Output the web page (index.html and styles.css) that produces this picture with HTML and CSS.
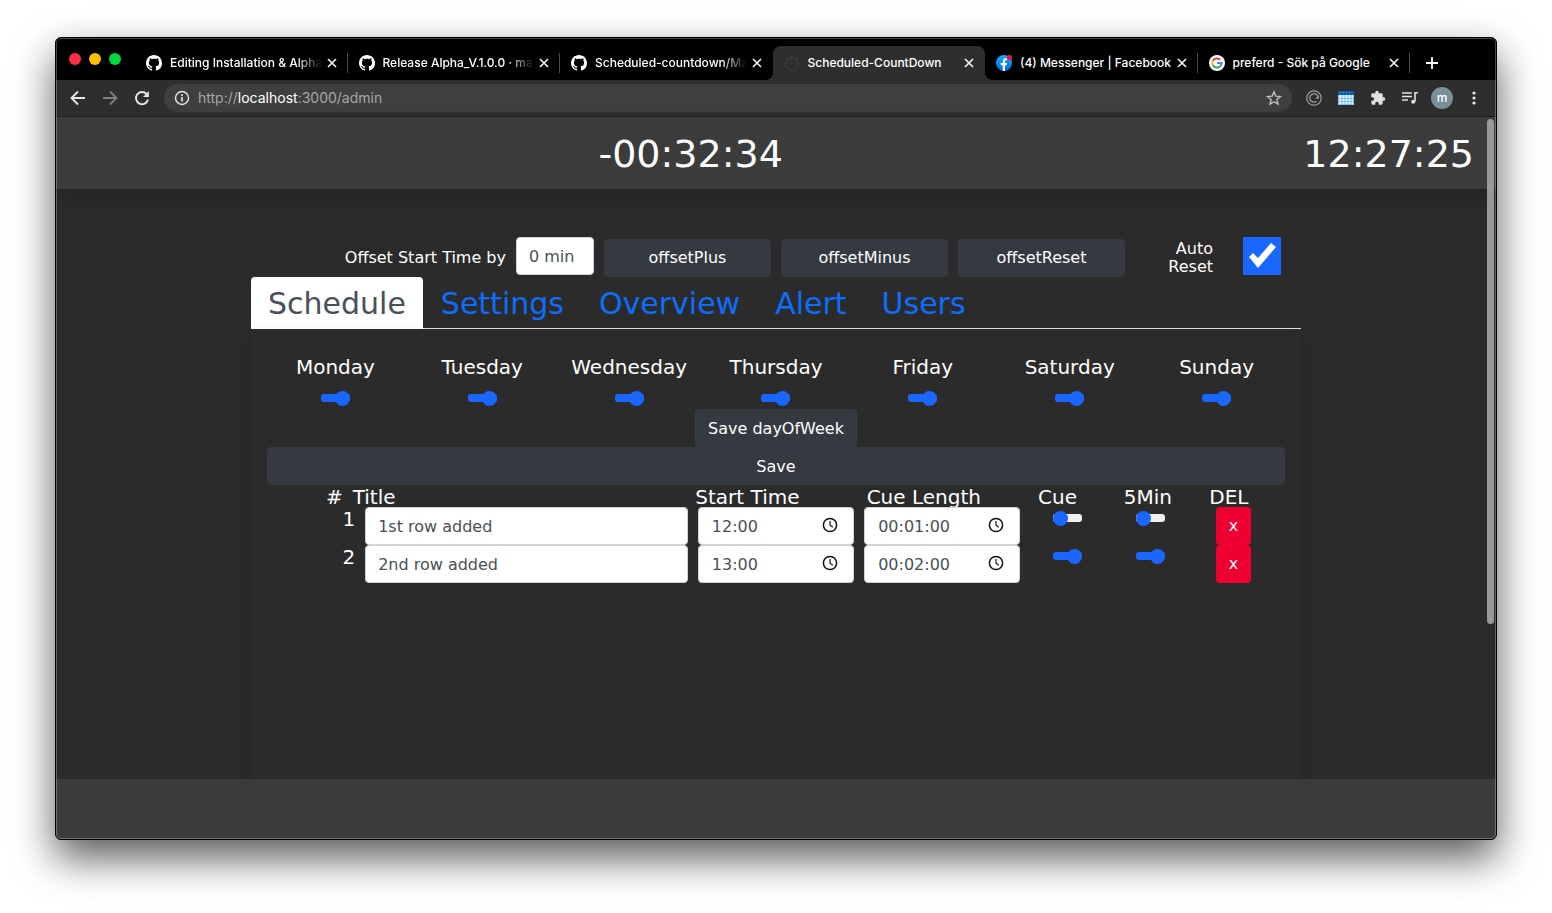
FILE: index.html
```html
<!DOCTYPE html>
<html lang="en">
<head>
<meta charset="utf-8">
<title>Scheduled-CountDown</title>
<link rel="stylesheet" href="styles.css">
</head>
<body>
<svg class="defs" aria-hidden="true">
  <symbol id="github" viewBox="0 0 16 16"><path fill="#fff" d="M8 0C3.58 0 0 3.58 0 8c0 3.54 2.29 6.53 5.47 7.59.4.07.55-.17.55-.38 0-.19-.01-.82-.01-1.49-2.01.37-2.53-.49-2.69-.94-.09-.23-.48-.94-.82-1.13-.28-.15-.68-.52-.01-.53.63-.01 1.08.58 1.23.82.72 1.21 1.87.87 2.33.66.07-.52.28-.87.51-1.07-1.78-.2-3.64-.89-3.64-3.95 0-.87.31-1.59.82-2.15-.08-.2-.36-1.02.08-2.12 0 0 .67-.21 2.2.82.64-.18 1.32-.27 2-.27s1.36.09 2 .27c1.53-1.04 2.2-.82 2.2-.82.44 1.1.16 1.92.08 2.12.51.56.82 1.27.82 2.15 0 3.07-1.87 3.75-3.65 3.95.29.25.54.73.54 1.48 0 1.07-.01 1.93-.01 2.2 0 .21.15.46.55.38A8.01 8.01 0 0 0 16 8c0-4.42-3.58-8-8-8z"/></symbol>
  <symbol id="close" viewBox="0 0 16 16"><path d="M4 4l8 8M12 4l-8 8" stroke="#f1f1f1" stroke-width="1.7" fill="none"/></symbol>
  <symbol id="clock" viewBox="0 0 16 16"><circle cx="8" cy="8" r="6.6" fill="none" stroke="#111" stroke-width="1.5"/><path d="M8 4v4.2l2.8 2" fill="none" stroke="#111" stroke-width="1.2"/></symbol>
</svg>
<div class="window">
  <div class="tabstrip">
    <div class="lights"><span class="light red"></span><span class="light yellow"></span><span class="light green"></span></div>
    <div class="tab"><svg class="favicon"><use href="#github"/></svg><span class="tab-title faded">Editing Installation &amp; Alpha</span><button class="tab-close" aria-label="Close tab"><svg><use href="#close"/></svg></button></div>
    <div class="tab"><svg class="favicon"><use href="#github"/></svg><span class="tab-title faded">Release Alpha_V.1.0.0 · ma</span><button class="tab-close" aria-label="Close tab"><svg><use href="#close"/></svg></button></div>
    <div class="tab before-active"><svg class="favicon"><use href="#github"/></svg><span class="tab-title faded">Scheduled-countdown/Ma</span><button class="tab-close" aria-label="Close tab"><svg><use href="#close"/></svg></button></div>
    <div class="tab active"><svg class="favicon" viewBox="0 0 16 16" fill="none" stroke="#3b3b3b" stroke-width="1.4"><circle cx="8" cy="9" r="6"/><path d="M6.500 1h3M8 1v2M12.500 4l1.500-1.500M3.500 4L2 2.500M8 9L5.500 7"/></svg><span class="tab-title">Scheduled-CountDown</span><button class="tab-close" aria-label="Close tab"><svg><use href="#close"/></svg></button></div>
    <div class="tab"><svg class="favicon" viewBox="0 0 16 16"><defs><linearGradient id="fb" x1="0" y1="0" x2="0" y2="1"><stop offset="0" stop-color="#18acfe"/><stop offset="1" stop-color="#0568e1"/></linearGradient></defs><circle cx="8" cy="8" r="8" fill="url(#fb)"/><path fill="#fff" d="M6.700 16v-5.700H4.700V8h2V6.400C6.700 4.300 7.800 3.200 9.700 3.200c.7 0 1.400.1 1.400.1v1.900h-.9c-.9 0-1.200.5-1.200 1.200V8h2l-.4 2.300H9V16z"/><circle cx="13.500" cy="2.500" r="2.600" fill="#f5123f"/></svg><span class="tab-title">(4) Messenger | Facebook</span><button class="tab-close" aria-label="Close tab"><svg><use href="#close"/></svg></button></div>
    <div class="tab"><svg class="favicon" viewBox="0 0 16 16"><circle cx="8" cy="8" r="8" fill="#fff"/><g fill="none" stroke-width="2"><path stroke="#ea4335" d="M11.200 4.700A4.600 4.600 0 0 0 3.900 5.900"/><path stroke="#fbbc05" d="M3.900 5.900a4.600 4.600 0 0 0 0 4.200"/><path stroke="#34a853" d="M3.900 10.100a4.600 4.600 0 0 0 7.200 1.200"/><path stroke="#4285f4" d="M11.100 11.300A4.600 4.600 0 0 0 12.600 8H8"/></g></svg><span class="tab-title">preferd - Sök på Google</span><button class="tab-close" aria-label="Close tab"><svg><use href="#close"/></svg></button></div>
    <button class="new-tab" aria-label="New tab"><svg viewBox="0 0 16 16"><path d="M8 2v12M2 8h12" stroke="#fff" stroke-width="1.800"/></svg></button>
  </div>

  <div class="toolbar">
    <button class="tool" aria-label="Back"><svg viewBox="0 0 16 16" fill="none" stroke="#e8e8e8" stroke-width="1.800"><path d="M15 8H2M8 1.500L1.500 8 8 14.500"/></svg></button>
    <button class="tool" aria-label="Forward"><svg viewBox="0 0 16 16" fill="none" stroke="#808080" stroke-width="1.800"><path d="M1 8h13M8 1.500L14.500 8 8 14.500"/></svg></button>
    <button class="tool" aria-label="Reload"><svg viewBox="0 0 16 16" fill="none" stroke="#e8e8e8" stroke-width="1.900"><path d="M14 9.500A6.100 6.100 0 1 1 12.600 4"/><path d="M14.900 1v6H9z" fill="#e8e8e8" stroke="none"/></svg></button>
    <div class="address">
      <svg viewBox="0 0 16 16" fill="none" stroke="#e8e8e8" stroke-width="1.400"><circle cx="8" cy="8" r="6.500"/><path d="M8 7v4.500M8 4.300v1.700" stroke-width="1.700"/></svg>
      <span class="url">http://<b>localhost</b>:3000/admin</span>
      <svg viewBox="0 0 16 16" fill="none" stroke="#c0c0c0" stroke-width="1.400"><path d="M8 1.800l1.800 4.300 4.700.4-3.600 3 1.100 4.600L8 11.700l-4 2.400 1.100-4.600-3.600-3 4.700-.4z"/></svg>
    </div>
    <button class="tool" aria-label="Extension"><svg viewBox="0 0 16 16" fill="none" stroke="#9a9a9a" stroke-width="1.300"><circle cx="8" cy="8" r="7.200"/><path d="M10.500 11.300A4.200 4.200 0 1 1 12.200 8M12.300 5.500V8.200H9.500"/></svg></button>
    <button class="tool" aria-label="Calendar"><svg viewBox="0 0 16 16"><path fill="#e4f4fd" d="M0 1h16v14H0z"/><path fill="#0c5fb0" d="M0 1h16v4H0z"/><path d="M.5 5v9.500h15V5M0 8.500h16M0 11.500h16M4 5v10M7 5v10M10 5v10M13 5v10" stroke="#6db7ea" stroke-width=".8" fill="none"/><path d="M2 2.500h12" stroke="#69aee5" stroke-dasharray="1 2"/></svg></button>
    <button class="tool" aria-label="Extensions"><svg viewBox="0 0 24 24"><path fill="#e0e0e0" d="M20.500 11H19V7c0-1.100-.9-2-2-2h-4V3.500a2.500 2.500 0 0 0-5 0V5H4c-1.100 0-2 .9-2 2v3.800h1.500a2.700 2.700 0 0 1 0 5.400H2V20c0 1.100.9 2 2 2h3.800v-1.500a2.700 2.700 0 0 1 5.400 0V22H17c1.100 0 2-.9 2-2v-4h1.500a2.500 2.500 0 0 0 0-5z"/></svg></button>
    <button class="tool" aria-label="Media"><svg viewBox="0 0 16 16" fill="none" stroke="#e0e0e0" stroke-width="1.600"><path d="M0 3h10M0 6.500h10M0 10h6M16 2.800h-3V11.500"/><circle cx="11.200" cy="11.800" r="2" fill="#e0e0e0" stroke="none"/></svg></button>
    <button class="tool avatar" aria-label="Profile">m</button>
    <button class="tool" aria-label="Menu"><svg viewBox="0 0 16 16" fill="#e8e8e8"><circle cx="8" cy="3" r="1.600"/><circle cx="8" cy="8" r="1.600"/><circle cx="8" cy="13" r="1.600"/></svg></button>
  </div>

  <div class="page">
    <header class="page-header">
      <div class="countdown">-00:32:34</div>
      <div class="time">12:27:25</div>
    </header>
    <main class="content">
      <div class="offset">
        <label for="offset">Offset Start Time by</label>
        <input class="field" id="offset" type="text" value="0 min">
        <button class="btn">offsetPlus</button>
        <button class="btn">offsetMinus</button>
        <button class="btn">offsetReset</button>
        <label for="auto">Auto Reset</label>
        <input class="check" id="auto" type="checkbox" checked>
      </div>
      <nav class="nav">
        <a class="current" href="#">Schedule</a><a href="#">Settings</a><a href="#">Overview</a><a href="#">Alert</a><a href="#">Users</a>
      </nav>
      <section class="panel">
        <div class="days">
          <label>Monday<input class="switch on" type="range" min="0" max="1" value="1"></label>
          <label>Tuesday<input class="switch on" type="range" min="0" max="1" value="1"></label>
          <label>Wednesday<input class="switch on" type="range" min="0" max="1" value="1"></label>
          <label>Thursday<input class="switch on" type="range" min="0" max="1" value="1"></label>
          <label>Friday<input class="switch on" type="range" min="0" max="1" value="1"></label>
          <label>Saturday<input class="switch on" type="range" min="0" max="1" value="1"></label>
          <label>Sunday<input class="switch on" type="range" min="0" max="1" value="1"></label>
        </div>
        <button class="btn save-days">Save dayOfWeek</button>
        <button class="btn">Save</button>
        <table class="cues">
          <thead>
            <tr><th class="num">#</th><th class="wide">Title</th><th class="mid">Start Time</th><th class="mid">Cue Length</th><th>Cue</th><th>5Min</th><th>DEL</th></tr>
          </thead>
          <tbody>
            <tr>
              <td class="num">1</td>
              <td class="wide"><input class="field" type="text" value="1st row added" aria-label="Title"></td>
              <td class="mid clocked"><input class="field" type="text" value="12:00" aria-label="Start time"><svg><use href="#clock"/></svg></td>
              <td class="mid clocked"><input class="field" type="text" value="00:01:00" aria-label="Cue length"><svg><use href="#clock"/></svg></td>
              <td class="mark"><input class="switch" type="range" min="0" max="1" value="0" aria-label="Cue"></td>
              <td class="mark"><input class="switch" type="range" min="0" max="1" value="0" aria-label="5Min"></td>
              <td class="mark"><button class="btn del">x</button></td>
            </tr>
            <tr>
              <td class="num">2</td>
              <td class="wide"><input class="field" type="text" value="2nd row added" aria-label="Title"></td>
              <td class="mid clocked"><input class="field" type="text" value="13:00" aria-label="Start time"><svg><use href="#clock"/></svg></td>
              <td class="mid clocked"><input class="field" type="text" value="00:02:00" aria-label="Cue length"><svg><use href="#clock"/></svg></td>
              <td class="mark"><input class="switch on" type="range" min="0" max="1" value="1" aria-label="Cue"></td>
              <td class="mark"><input class="switch on" type="range" min="0" max="1" value="1" aria-label="5Min"></td>
              <td class="mark"><button class="btn del">x</button></td>
            </tr>
          </tbody>
        </table>
      </section>
    </main>
    <footer class="page-footer"></footer>
    <div class="scrollbar"></div>
  </div>
</div>
</body>
</html>
```
FILE: styles.css
```css
* { box-sizing: border-box; }

body {
  margin: 0;
  min-height: 100vh;
  padding: 37px 55px 73px;
  display: flex;
  background: #fff;
  font-family: "DejaVu Sans", sans-serif;
  color: #fff;
}

button { font: inherit; color: inherit; border: 0; background: none; padding: 0; }
svg { display: block; flex: none; width: 16px; height: 16px; }
.defs { position: absolute; width: 0; height: 0; }

.window {
  position: relative;
  flex: 1;
  min-width: 0;
  display: flex;
  flex-direction: column;
  border: 1px solid #000;
  border-radius: 6px;
  overflow: hidden;
  background: #000;
  box-shadow: 0 18px 40px rgba(0, 0, 0, .65);
}
.window::after {
  content: "";
  position: absolute;
  inset: 0;
  border: 1px solid rgba(255, 255, 255, .28);
  border-radius: 5px;
  pointer-events: none;
}

/* Tab strip */
.tabstrip {
  display: flex;
  height: 42px;
  padding-top: 8px;
  font: 500 12px/34px Inter, sans-serif;
}
.lights { display: flex; gap: 8px; width: 79px; padding: 7px 0 0 13px; flex: none; }
.light { width: 12px; height: 12px; border-radius: 50%; }
.red { background: #ff2d42; }
.yellow { background: #ffbf00; }
.green { background: #00d83c; }
.tab {
  position: relative;
  display: flex;
  align-items: center;
  flex: 1;
  min-width: 0;
  padding: 0 8px 0 11px;
}
.tab::after {
  content: "";
  position: absolute;
  right: 0;
  top: 7px;
  width: 1px;
  height: 20px;
  background: #4a4a4a;
}
.tab.active::after, .tab.before-active::after { display: none; }
.tab.active {
  background: #2e2e2e;
  border-radius: 8px 8px 0 0;
}
.tab.active::before {
  content: "";
  position: absolute;
  left: -8px;
  right: -8px;
  bottom: 0;
  height: 8px;
  background:
    radial-gradient(circle at 0 0, transparent 8px, #2e2e2e 8px) left / 8px 8px no-repeat,
    radial-gradient(circle at 100% 0, transparent 8px, #2e2e2e 8px) right / 8px 8px no-repeat;
}
.tab-title {
  flex: 1;
  min-width: 0;
  margin-left: 8px;
  overflow: hidden;
  white-space: nowrap;
}
.tab-title.faded { mask-image: linear-gradient(to left, transparent 2px, #000 28px); }
.new-tab { flex: none; width: 43px; margin-right: 43px; display: grid; place-items: center; }

/* Toolbar */
.toolbar {
  display: flex;
  align-items: center;
  height: 37px;
  padding: 0 6px;
  background: #2e2e2e;
  border-bottom: 1px solid #1e1e1e;
}
.tool { width: 32px; display: grid; place-items: center; flex: none; }
.address {
  flex: 1;
  min-width: 0;
  display: flex;
  align-items: center;
  gap: 8px;
  height: 28px;
  margin: 0 6px;
  padding: 0 10px;
  border-radius: 14px;
  background: #3f3f3f;
  font: 14px/28px Inter, sans-serif;
  color: #a6a6a6;
}
.url { flex: 1; }
.url b { font-weight: 400; color: #fff; }
.avatar {
  width: 22px;
  height: 22px;
  margin: 0 5px;
  border-radius: 50%;
  background: #78909c;
  font: 500 12px/20px Inter, sans-serif;
}

/* Page */
.page {
  position: relative;
  flex: 1;
  min-height: 0;
  display: flex;
  flex-direction: column;
  background: #2b2b2b;
}
.page-header {
  display: flex;
  height: 72px;
  padding: 0 22px;
  background: #3c3c3c;
  font-size: 38px;
  line-height: 74px;
  box-shadow: 0 8px 16px rgba(0, 0, 0, .15);
}
.countdown { flex: 1; text-align: center; }
.content {
  flex: 1;
  display: flex;
  flex-direction: column;
  width: 100%;
  max-width: 1050px;
  margin: 0 auto;
  padding-top: 48px;
}
.page-footer {
  position: relative;
  height: 60px;
  background: #3c3c3c;
}
.scrollbar {
  position: absolute;
  top: 2px;
  right: 2px;
  width: 7px;
  height: 70%;
  border-radius: 4px;
  background: #989898;
}

.offset {
  display: grid;
  grid-template-columns: 255fr 78fr 167fr 167fr 167fr 78fr 78fr;
  gap: 10px;
  height: 40px;
  font-size: 16px;
  line-height: 18px;
}
.offset label { align-self: center; padding-top: 2px; text-align: right; }
.offset .btn { margin-top: 2px; }
.field {
  width: 100%;
  height: 38px;
  padding: 0 12px;
  border: 1px solid #ced4da;
  border-radius: 4px;
  background: #fff;
  color: #495057;
  font: 16px "DejaVu Sans", sans-serif;
}
.btn {
  height: 38px;
  border-radius: 4px;
  background: #343a40;
  color: #fff;
  font-size: 16px;
}
.check {
  appearance: none;
  width: 38px;
  height: 38px;
  margin: 0 0 0 20px;
  border-radius: 1px;
  background: #1a66ff;
}
.check:checked::before {
  content: "";
  display: block;
  width: 38px;
  height: 38px;
  background: #fff;
  clip-path: polygon(6px 20px, 10px 16px, 15px 21px, 28px 6px, 33px 10px, 15px 31px);
}

.nav {
  display: flex;
  gap: 1px;
  height: 52px;
  border-bottom: 1px solid #dee2e6;
  font-size: 30px;
  line-height: 54px;
}
.nav a {
  padding: 0 17px;
  color: #0d6efd;
  text-decoration: none;
}
.nav .current {
  height: 52px;
  border-radius: 4px 4px 0 0;
  background: #fff;
  color: #495057;
}

.panel {
  flex: 1;
  display: flex;
  flex-direction: column;
  padding: 16px;
  box-shadow: 0 8px 16px rgba(0, 0, 0, .15);
}
.days {
  display: grid;
  grid-template-columns: repeat(7, 1fr);
  gap: 10px;
  font-size: 20px;
  line-height: 44px;
}
.days label { display: flex; flex-direction: column; align-items: center; height: 64px; }
.save-days { align-self: center; padding: 0 13px; }

.switch {
  appearance: none;
  display: block;
  width: 29px;
  height: 18px;
  margin: 0;
  background: none;
}
.switch::-webkit-slider-runnable-track {
  height: 8px;
  border-radius: 3px;
  background: #efefef;
}
.switch.on::-webkit-slider-runnable-track { background: #1a66ff; }
.switch::-webkit-slider-thumb {
  appearance: none;
  width: 15px;
  height: 15px;
  margin-top: -3px;
  border-radius: 50%;
  background: #1a66ff;
}

.cues, .cues thead, .cues tbody { display: block; }
.cues { font-size: 20px; }
.cues tr { display: grid; grid-template-columns: repeat(12, minmax(0, 1fr)); column-gap: 10px; }
.cues thead tr { height: 22px; }
.cues tbody { padding: 0 15px; }
.cues th { padding: 0; text-align: left; font-weight: 400; line-height: 24px; white-space: nowrap; }
.cues td { padding: 0; line-height: 24px; }
.cues .num { text-align: right; }
.cues .wide { grid-column: span 4; }
.cues .mid { grid-column: span 2; }
.cues .field { display: block; }
.cues .switch { margin-top: 2px; }
.cues .clocked .field { padding: 0 13px; }
.mark { display: flex; justify-content: center; align-items: flex-start; }
.clocked { position: relative; }
.clocked svg { position: absolute; right: 16px; top: 10px; }
.del { width: 35px; background: #ee0033; }
```
